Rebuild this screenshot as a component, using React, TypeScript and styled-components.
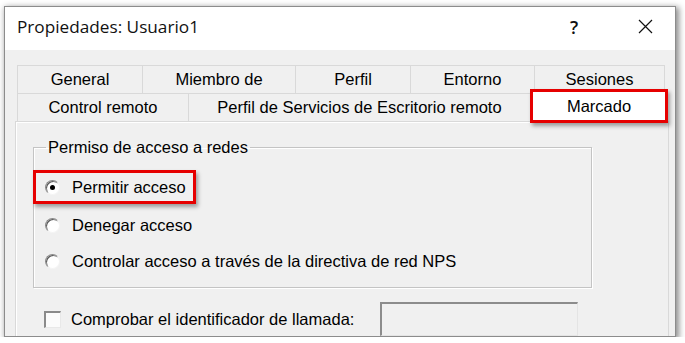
import React from "react";
import styled, { createGlobalStyle } from "styled-components";

const Global = createGlobalStyle`
  html, body {
    margin: 0;
    padding: 0;
    background: #ffffff;
    overflow: hidden;
  }
  body {
    font-family: "Liberation Sans", Arial, sans-serif;
    font-size: 16.5px;
    color: #000;
  }
`;

const Window = styled.div`
  margin: 6px 0 0 4px;
  width: 672px;
  height: 331px;
  box-sizing: border-box;
  border: 1px solid #8c8c8c;
  background: #f0f0f0;
  box-shadow: 2px 2px 6px 1px rgba(0, 0, 0, 0.45);
  display: flex;
  flex-direction: column;
  overflow: hidden;
`;

const TitleBar = styled.div`
  height: 43px;
  flex: none;
  background: #ffffff;
  display: flex;
  align-items: center;
  gap: 11px;
  padding: 0 0 4px 12px;
  box-sizing: border-box;
`;

const Title = styled.div`
  flex: 1;
  font-family: "Open Sans", "Noto Sans", sans-serif;
  font-size: 17.2px;
  color: #111;
`;

const TitleButton = styled.div`
  width: 60px;
  display: flex;
  justify-content: center;
  align-items: center;
  font-family: "Open Sans", "Noto Sans", sans-serif;
  font-size: 18px;
  font-weight: 600;
  color: #111;
`;

const Body = styled.div`
  flex: 1;
  padding: 15px 6px 0 10px;
  display: flex;
  flex-direction: column;
  min-height: 0;
`;

const TabStrip = styled.div`
  margin: 0 3px 0 2px;
  display: flex;
  flex-direction: column;
`;

const TabRow = styled.div`
  display: flex;
  height: 28px;
`;

const Tab = styled.div<{ $w: number; $last?: boolean }>`
  width: ${(p) => p.$w}px;
  box-sizing: border-box;
  border-top: 1px solid #d9d9d9;
  border-left: 1px solid #d9d9d9;
  border-right: ${(p) => (p.$last ? "1px solid #d9d9d9" : "none")};
  display: flex;
  align-items: center;
  justify-content: center;
  padding-bottom: 1px;
  white-space: nowrap;
`;

const SelectedTab = styled.div<{ $w: number }>`
  width: ${(p) => p.$w + 3}px;
  margin: -4px -3px -2px 0;
  box-sizing: border-box;
  background: #ffffff;
  border: 3px solid #e60000;
  box-shadow: 2px 3px 4px rgba(0, 0, 0, 0.35);
  position: relative;
  z-index: 2;
  display: flex;
  justify-content: center;
  padding-top: 5px;
`;

const Panel = styled.div`
  flex: 1;
  border: 1px solid #d9d9d9;
  border-bottom: none;
  box-shadow: inset 1px 1px 0 #ffffff;
  padding: 16px 0 0 17px;
  display: flex;
  flex-direction: column;
`;

const Group = styled.fieldset`
  margin: 0;
  width: 559px;
  box-sizing: border-box;
  padding: 14px 0 11px 0;
  border: 1px solid #c4c4c4;
  box-shadow: inset 1px 1px 0 #ffffff, 1px 1px 0 #ffffff;
  display: flex;
  flex-direction: column;
  gap: 6px;
`;

const Legend = styled.legend`
  margin-left: 12px;
  padding: 0 2px;
  line-height: 18px;
`;

const Option = styled.div<{ $marked?: boolean }>`
  display: flex;
  align-items: center;
  gap: 12px;
  align-self: flex-start;
  box-sizing: border-box;
  height: ${(p) => (p.$marked ? 34 : 30)}px;
  margin-left: ${(p) => (p.$marked ? -1 : 0)}px;
  padding: ${(p) => (p.$marked ? "0 7px 0 9px" : "0 0 0 11px")};
  border: ${(p) => (p.$marked ? "3px solid #e60000" : "none")};
  box-shadow: ${(p) => (p.$marked ? "2px 3px 4px rgba(0,0,0,0.35)" : "none")};
`;

const Radio = styled.span<{ $on?: boolean }>`
  width: 15px;
  height: 15px;
  box-sizing: border-box;
  border-radius: 50%;
  background: #ffffff;
  border: 1px solid;
  border-color: #8a8a8a #f4f4f4 #f4f4f4 #8a8a8a;
  box-shadow: inset 1px 1px 0 #5a5a5a;
  display: flex;
  align-items: center;
  justify-content: center;
  flex: none;
  &::after {
    content: "";
    width: 5px;
    height: 5px;
    border-radius: 50%;
    background: #000;
    display: ${(p) => (p.$on ? "block" : "none")};
  }
`;

const CheckRow = styled.div`
  display: flex;
  align-items: center;
  margin-top: 14px;
  padding-left: 11px;
`;

const CheckBox = styled.span`
  width: 17px;
  height: 17px;
  box-sizing: border-box;
  flex: none;
  background: #fbfbfb;
  border-top: 2px solid #8a8a8a;
  border-left: 2px solid #8a8a8a;
  border-right: 1px solid #e8e8e8;
  border-bottom: 1px solid #e8e8e8;
  margin-right: 10px;
`;

const CheckLabel = styled.span`
  width: 309px;
  white-space: nowrap;
`;

const TextField = styled.div`
  width: 198px;
  height: 34px;
  box-sizing: border-box;
  flex: none;
  background: #f0f0f0;
  border-top: 2px solid #8c8c8c;
  border-left: 2px solid #8c8c8c;
  border-right: 1px solid #e4e4e4;
  border-bottom: 1px solid #e4e4e4;
`;

const CloseIcon = () => (
  <svg width="15" height="15" viewBox="0 0 15 15">
    <path d="M1 1 L14 14 M14 1 L1 14" stroke="#111" strokeWidth="1.2" fill="none" />
  </svg>
);

export default function App() {
  return (
    <>
      <Global />
      <Window>
        <TitleBar>
          <Title>Propiedades: Usuario1</Title>
          <TitleButton>?</TitleButton>
          <TitleButton>
            <CloseIcon />
          </TitleButton>
        </TitleBar>
        <Body>
          <TabStrip>
            <TabRow>
              <Tab $w={125}>General</Tab>
              <Tab $w={153}>Miembro de</Tab>
              <Tab $w={115}>Perfil</Tab>
              <Tab $w={124}>Entorno</Tab>
              <Tab $w={131} $last>
                Sesiones
              </Tab>
            </TabRow>
            <TabRow>
              <Tab $w={171}>Control remoto</Tab>
              <Tab $w={342}>Perfil de Servicios de Escritorio remoto</Tab>
              <SelectedTab $w={135}>Marcado</SelectedTab>
            </TabRow>
          </TabStrip>
          <Panel>
            <Group>
              <Legend>Permiso de acceso a redes</Legend>
              <Option $marked>
                <Radio $on />
                Permitir acceso
              </Option>
              <Option>
                <Radio />
                Denegar acceso
              </Option>
              <Option>
                <Radio />
                Controlar acceso a través de la directiva de red NPS
              </Option>
            </Group>
            <CheckRow>
              <CheckBox />
              <CheckLabel>Comprobar el identificador de llamada:</CheckLabel>
              <TextField />
            </CheckRow>
          </Panel>
        </Body>
      </Window>
    </>
  );
}
